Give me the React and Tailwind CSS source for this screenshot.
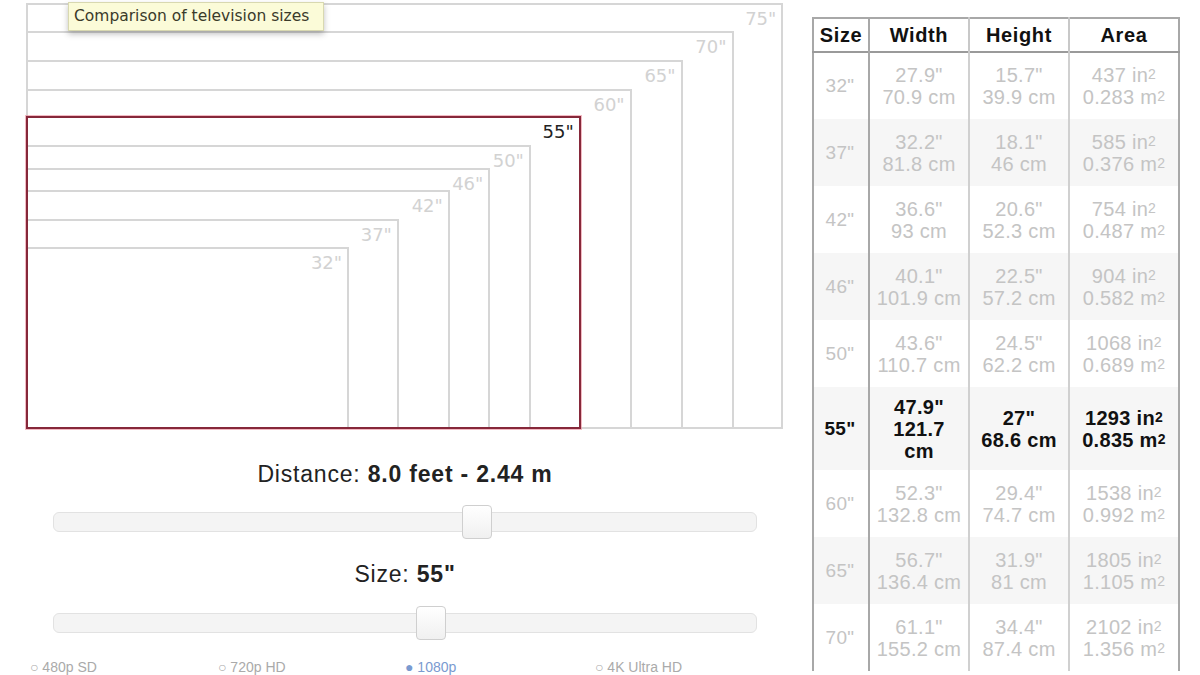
// TV size comparison: nested screens, distance/size sliders and a size table

const tvSizes = [
  { size: 32, w: 27.9, h: 15.7, wcm: "70.9 cm", hcm: "39.9 cm", ain: "437", am: "0.283" },
  { size: 37, w: 32.2, h: 18.1, wcm: "81.8 cm", hcm: "46 cm", ain: "585", am: "0.376" },
  { size: 42, w: 36.6, h: 20.6, wcm: "93 cm", hcm: "52.3 cm", ain: "754", am: "0.487" },
  { size: 46, w: 40.1, h: 22.5, wcm: "101.9 cm", hcm: "57.2 cm", ain: "904", am: "0.582" },
  { size: 50, w: 43.6, h: 24.5, wcm: "110.7 cm", hcm: "62.2 cm", ain: "1068", am: "0.689" },
  { size: 55, w: 47.9, h: 27, wcm: "121.7 cm", hcm: "68.6 cm", ain: "1293", am: "0.835" },
  { size: 60, w: 52.3, h: 29.4, wcm: "132.8 cm", hcm: "74.7 cm", ain: "1538", am: "0.992" },
  { size: 65, w: 56.7, h: 31.9, wcm: "136.4 cm", hcm: "81 cm", ain: "1805", am: "1.105" },
  { size: 70, w: 61.1, h: 34.4, wcm: "155.2 cm", hcm: "87.4 cm", ain: "2102", am: "1.356" },
  { size: 75, w: 65.4, h: 36.8, wcm: "166.1 cm", hcm: "93.4 cm", ain: "2404", am: "1.551" },
];

const SELECTED = 55;
const PX_PER_INCH = 11.58;

const ScreenChart = () => {
  // biggest first so smaller screens sit on top
  const screens = [...tvSizes].reverse();
  return (
    <div className="relative h-[430px] w-full">
      {screens.map((tv) => {
        const active = tv.size === SELECTED;
        return (
          <div
            key={tv.size}
            className={`absolute left-[26px] bottom-[1px] ${
              active
                ? "border-2 border-[#86283a] shadow-[0_0_0_1px_rgba(235,140,155,0.6)] z-10"
                : "border-2 border-[#d6d6d6]"
            }`}
            style={{ width: tv.w * PX_PER_INCH, height: tv.h * PX_PER_INCH }}
          >
            <span
              className={`absolute right-[5px] top-[3px] text-[18px] leading-[22px] font-['DejaVu_Sans',sans-serif] ${
                active ? "text-[#222]" : "text-[#d2d2d2]"
              }`}
            >
              {tv.size}"
            </span>
          </div>
        );
      })}

      <div className="absolute left-[68px] top-[2px] z-20 h-[29px] w-[256px] border border-[#d8d8b0] bg-[#fbfbd8] px-[5px] shadow-[0_3px_6px_rgba(0,0,0,0.25)] text-[15.5px] leading-[27px] text-[#3a3a2a] font-['DejaVu_Sans',sans-serif] whitespace-nowrap">
        Comparison of television sizes
      </div>
    </div>
  );
};

const Slider = ({ thumbLeft }) => (
  <div className="relative mx-[53px] h-[34px]">
    <div className="absolute left-0 right-0 top-[7px] h-[20px] rounded-[6px] border border-[#e2e2e2] bg-[#f4f4f4]" />
    <div
      className="absolute top-0 h-[34px] w-[30px] rounded-[4px] border border-[#cfcfcf] bg-gradient-to-b from-white to-[#f0f0f0]"
      style={{ left: thumbLeft }}
    />
  </div>
);

const TableRow = ({ tv, shaded }) => {
  const active = tv.size === SELECTED;
  const text = active ? "text-[#111] font-bold" : "text-[#c4c4c4]";
  return (
    <tr className={`${shaded ? "bg-[#f6f6f6]" : "bg-white"} ${active ? "h-[83px]" : "h-[67px]"}`}>
      <td className={`border-r-2 border-[#a8a8a8] pr-[2px] text-center text-[19px] ${text}`}>{tv.size}"</td>
      <td className={`border-r-2 border-[#d0d0d0] px-[2px] text-center ${text}`}>
        {tv.w}"<br />
        {active ? (
          <>
            {tv.wcm.replace(" cm", "")}
            <br />
            cm
          </>
        ) : (
          tv.wcm
        )}
      </td>
      <td className={`border-r-2 border-[#d0d0d0] px-[2px] text-center ${text}`}>
        {tv.h}"<br />
        {tv.hcm}
      </td>
      <td className={`px-[2px] text-center ${text}`}>
        {tv.ain} in<sup className="relative -top-[3px] text-[14px]">2</sup>
        <br />
        {tv.am} m<sup className="relative -top-[3px] text-[14px]">2</sup>
      </td>
    </tr>
  );
};

const SizeTable = () => (
  <table className="mt-[17px] h-fit border-collapse border-2 border-b-0 border-[#a8a8a8] text-[20px] leading-[22px] tracking-[0.3px] font-['Liberation_Sans',Arial,sans-serif]">
    <colgroup>
      <col className="w-[56px]" />
      <col className="w-[100px]" />
      <col className="w-[100px]" />
      <col className="w-[110px]" />
    </colgroup>
    <thead>
      <tr className="h-[34px] border-b-2 border-[#9a9a9a] text-[20px] tracking-[0.6px] text-[#111]">
        <th className="border-r-2 border-[#a8a8a8] font-bold">Size</th>
        <th className="border-r-2 border-[#c8c8c8] font-bold">Width</th>
        <th className="border-r-2 border-[#c8c8c8] font-bold">Height</th>
        <th className="font-bold">Area</th>
      </tr>
    </thead>
    <tbody>
      {/* only the rows that fit in the view, up to 70" */}
      {tvSizes.slice(0, 9).map((tv, i) => (
        <TableRow key={tv.size} tv={tv} shaded={i % 2 === 1} />
      ))}
    </tbody>
  </table>
);

export default function App() {
  return (
    <div className="h-[675px] w-[1200px] overflow-hidden bg-white font-['Liberation_Sans',Arial,sans-serif]">
      <div className="flex gap-[2px]">
        <div className="w-[810px] shrink-0">
          <ScreenChart />

          <p className="mt-[30px] text-center text-[23px] leading-[28px] tracking-[0.8px] text-[#222]">
            Distance: <span className="font-bold">8.0 feet - 2.44 m</span>
          </p>
          <div className="mt-[17px]">
            <Slider thumbLeft={409} />
          </div>

          <p className="mt-[21px] text-center text-[23px] leading-[28px] tracking-[0.8px] text-[#222]">
            Size: <span className="font-bold">55"</span>
          </p>
          <div className="mt-[18px]">
            <Slider thumbLeft={363} />
          </div>

          <div className="mt-[18px] flex px-[30px] text-[14px] leading-[18px] text-[#aaa]">
            <span className="w-[188px]">○ 480p SD</span>
            <span className="w-[187px]">○ 720p HD</span>
            <span className="w-[190px] text-[#7a9ad0]">● 1080p</span>
            <span>○ 4K Ultra HD</span>
          </div>
        </div>

        <SizeTable />
      </div>
    </div>
  );
}
